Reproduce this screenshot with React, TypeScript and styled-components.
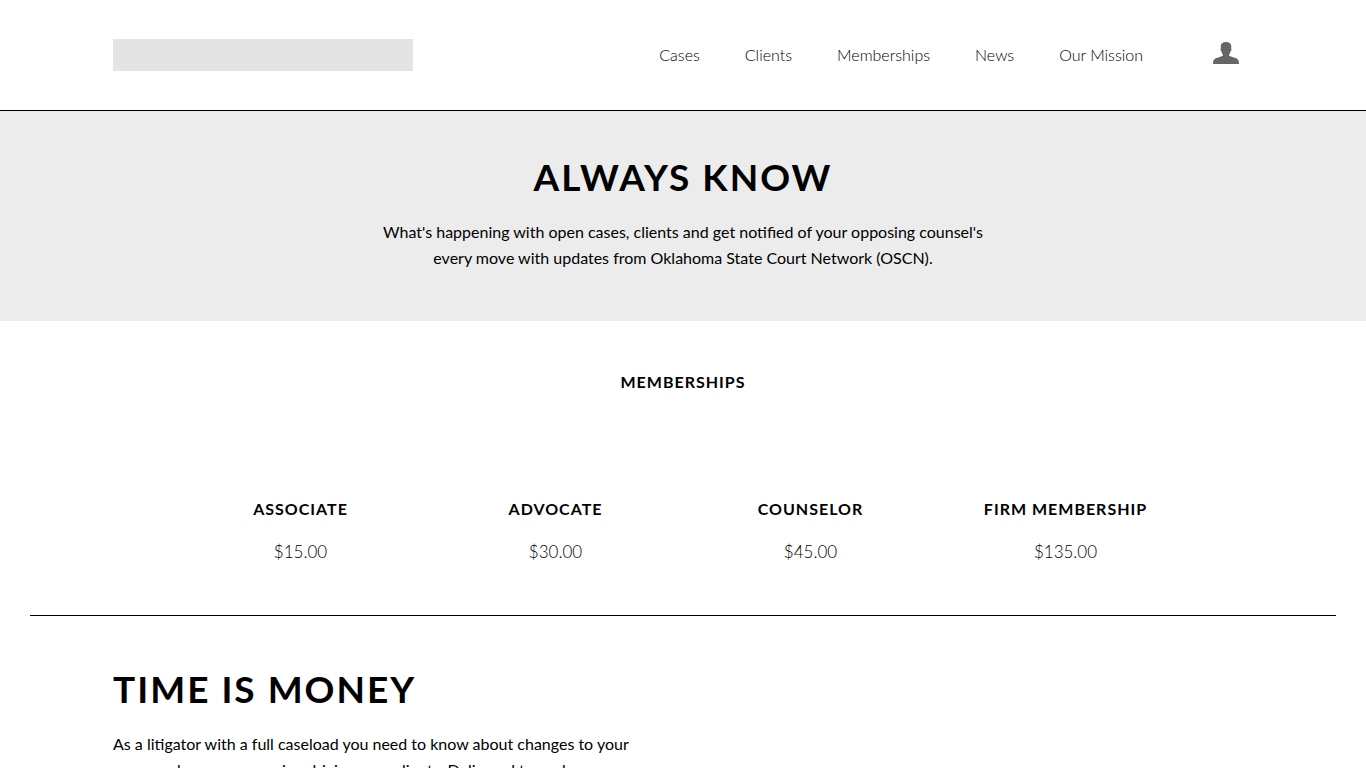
import React from 'react';
import styled, { createGlobalStyle } from 'styled-components';

const GlobalStyle = createGlobalStyle`
  *, *::before, *::after { box-sizing: border-box; }
  body {
    margin: 0;
    background: #fff;
    color: #000;
    font-family: Lato, sans-serif;
    font-size: 16px;
    font-weight: 400;
    line-height: 26px;
  }
`;

const Page = styled.div`
  height: 100vh;
  overflow: hidden;
`;

const Header = styled.header`
  border-bottom: 1px solid #000;
`;

const HeaderInner = styled.div`
  max-width: 1140px;
  height: 110px;
  margin: 0 auto;
  display: flex;
  align-items: center;
  justify-content: space-between;
`;

const Logo = styled.a`
  width: 300px;
  height: 32px;
  background: #e4e4e4;
`;

const Nav = styled.nav`
  display: flex;
  align-items: center;
  gap: 45px;
`;

const NavLink = styled.a`
  color: #000;
  font-weight: 300;
  text-decoration: none;
`;

const AccountButton = styled.button`
  display: flex;
  margin: 0 14px 4px 25px;
  padding: 0;
  border: 0;
  background: none;
  color: #666;
  cursor: pointer;
`;

const Hero = styled.section`
  padding: 40px 20px 50px;
  background: #ececec;
  text-align: center;
`;

const Title = styled.h1`
  margin: 0 0 16px;
  font-size: 37px;
  font-weight: 700;
  line-height: 52px;
  letter-spacing: 2px;
`;

const HeroText = styled.p`
  max-width: 640px;
  margin: 0 auto;
`;

const Memberships = styled.section`
  margin: 0 30px;
  padding: 48px 0 50px;
  border-bottom: 1px solid #000;
  text-align: center;
`;

const Subtitle = styled.h2`
  margin: 0;
  font-size: 16px;
  font-weight: 700;
  line-height: 26px;
  letter-spacing: 1px;
`;

const Plans = styled.div`
  max-width: 1020px;
  margin: 101px auto 0;
  display: grid;
  grid-template-columns: repeat(4, 1fr);
`;

const Price = styled.p`
  margin: 17px 0 0;
  font-size: 17px;
  font-weight: 300;
`;

const Article = styled.section`
  max-width: 1140px;
  margin: 0 auto;
  padding-top: 47px;
`;

const ArticleText = styled.p`
  max-width: 540px;
  margin: 0;
`;

const links = ['Cases', 'Clients', 'Memberships', 'News', 'Our Mission'];

const plans = [
  { name: 'ASSOCIATE', price: '$15.00' },
  { name: 'ADVOCATE', price: '$30.00' },
  { name: 'COUNSELOR', price: '$45.00' },
  { name: 'FIRM MEMBERSHIP', price: '$135.00' },
];

export default function App() {
  return (
    <Page>
      <GlobalStyle />
      <Header>
        <HeaderInner>
          <Logo href="#" aria-label="Home" />
          <Nav>
            {links.map((link) => (
              <NavLink key={link} href="#">{link}</NavLink>
            ))}
            <AccountButton aria-label="Account">
              <svg width="26" height="22" viewBox="0 0 26 22" fill="currentColor" aria-hidden="true">
                <path d="M13 0C9.500 0 7.700 1.500 7.700 4.600c0 .7.100 1.300.200 1.900-.6.300-.5 2.200.5 2.800.3 1.500.8 2.600 1.500 3.400v.9C8.500 15 3.500 15.600 1.400 17.200.4 18 0 19.400 0 22h26c0-2.600-.4-4-1.400-4.800-2.100-1.600-7.100-2.200-8.500-3.600v-.9c.7-.8 1.200-1.900 1.500-3.400 1-.6 1.100-2.500.5-2.800.1-.6.200-1.200.200-1.900C18.300 1.500 16.500 0 13 0z" />
              </svg>
            </AccountButton>
          </Nav>
        </HeaderInner>
      </Header>
      <main>
        <Hero>
          <Title>ALWAYS KNOW</Title>
          <HeroText>
            What's happening with open cases, clients and get notified of your opposing counsel's
            every move with updates from Oklahoma State Court Network (OSCN).
          </HeroText>
        </Hero>
        <Memberships>
          <Subtitle>MEMBERSHIPS</Subtitle>
          <Plans>
            {plans.map((plan) => (
              <div key={plan.name}>
                <Subtitle as="h3">{plan.name}</Subtitle>
                <Price>{plan.price}</Price>
              </div>
            ))}
          </Plans>
        </Memberships>
        <Article>
          <Title as="h2">TIME IS MONEY</Title>
          <ArticleText>
            As a litigator with a full caseload you need to know about changes to your
            cases and news concerning driving your clients. Delivered to each
          </ArticleText>
        </Article>
      </main>
    </Page>
  );
}
